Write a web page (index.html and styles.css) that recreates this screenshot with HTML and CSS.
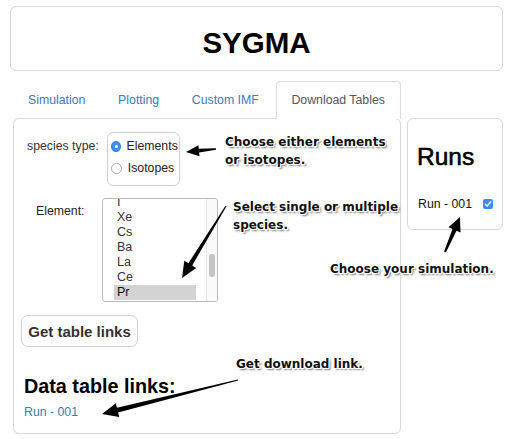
FILE: index.html
```html
<!DOCTYPE html>
<html lang="en">
<head>
<meta charset="utf-8">
<title>SYGMA</title>
<link rel="stylesheet" href="styles.css">
</head>
<body>
<header class="header"><h1 class="title">SYGMA</h1></header>

<nav class="tabs">
  <a class="tab">Simulation</a>
  <a class="tab">Plotting</a>
  <a class="tab">Custom IMF</a>
  <a class="tab active">Download Tables</a>
</nav>

<div class="main">
  <section class="panel">
    <div class="row species">
      <span class="label">species type:</span>
      <div class="radios">
        <div class="radio-line"><span class="radio on"></span><span>Elements</span></div>
        <div class="radio-line"><span class="radio"></span><span>Isotopes</span></div>
      </div>
    </div>
    <div class="row element">
      <span class="label elabel">Element:</span>
      <div class="listbox">
        <div class="options">
          <div class="opt">I</div>
          <div class="opt">Xe</div>
          <div class="opt">Cs</div>
          <div class="opt">Ba</div>
          <div class="opt">La</div>
          <div class="opt">Ce</div>
          <div class="opt sel">Pr</div>
        </div>
        <div class="scrollbar"><div class="thumb"></div></div>
      </div>
    </div>
    <div class="row btnrow"><button class="btn">Get table links</button></div>
    <h3 class="links-title">Data table links:</h3>
    <a class="link">Run - 001</a>
  </section>

  <aside class="runs">
    <h2 class="runs-title">Runs</h2>
    <div class="run-row"><span>Run - 001</span><span class="check"><svg width="10" height="10" viewBox="0 0 10 10"><path d="M2.3 5.2 L4.2 7 L7.8 2.8" fill="none" stroke="#fff" stroke-width="1.4" stroke-linecap="round" stroke-linejoin="round"/></svg></span></div>
  </aside>
</div>

<div class="note n1">Choose either elements<br>or isotopes.</div>
<div class="note n2">Select single or multiple<br>species.</div>
<div class="note n3">Choose your simulation.</div>
<div class="note n4">Get download link.</div>

<svg class="arrows" width="511" height="439" viewBox="0 0 511 439">
  <polygon points="215.9,148.2 198.8,148.8 198.4,145.2 186,152 199.5,156.2 199.1,152.6 216.1,149.8"/>
  <polygon points="225.5,205.7 188.4,263.2 184.3,260.7 182,278 196.3,268 192.2,265.5 226.5,206.3"/>
  <polygon points="445.9,252.4 456.5,230.8 460.5,232.5 460,217 448.5,227.3 452.5,229 444.1,251.6"/>
  <polygon points="237.85,379.4 116.9,407.7 115.8,403.3 102,414 119.2,416.9 118.1,412.5 238.15,380.6"/>
</svg>
</body>
</html>
```

FILE: styles.css
```css
html, body {
  margin: 0;
  padding: 0;
  background: #fff;
}
body {
  padding: 6px 8px 0 10px;
  font-family: "Liberation Sans", Arial, Helvetica, sans-serif;
  font-size: 12.3px;
  color: #333;
  position: relative;
  width: 493px;
}

.header {
  border: 1px solid #d6d6d6;
  border-radius: 6px;
  height: 63px;
  text-align: center;
}
.title {
  margin: 0;
  padding-top: 19px;
  font-size: 29.5px;
  line-height: 33px;
  font-weight: bold;
  color: #000;
}

.tabs {
  display: flex;
  margin: 10px 0 0 3px;
  position: relative;
  z-index: 2;
}
.tab {
  display: block;
  padding: 10px 14px;
  line-height: 16px;
  border: 1px solid transparent;
  border-bottom: none;
  margin-right: 2.7px;
  color: #3a7ab9;
  border-radius: 4px 4px 0 0;
}
.tab.active {
  color: #555;
  border-color: #ddd;
  background: #fff;
  margin-bottom: -1px;
  padding-bottom: 11px;
  padding-right: 15px;
}

.main {
  display: flex;
  align-items: flex-start;
  margin-left: 3px;
  gap: 6px;
}

.panel {
  width: 386px;
  height: 314px;
  border: 1px solid #d8d8d8;
  border-radius: 6px;
  position: relative;
}

.row {
  display: flex;
  align-items: flex-start;
}
.species {
  padding: 13px 0 0 13px;
}
.label {
  line-height: 22px;
  margin-top: 3px;
}
.radios {
  margin-left: 8px;
  border: 1px solid #cfcfcf;
  border-radius: 6px;
  padding: 2px 1px 6px 2px;
  width: 68px;
}
.radio-line {
  display: flex;
  align-items: center;
  height: 22px;
  color: #222;
}
.radio {
  width: 9px;
  height: 9px;
  border-radius: 50%;
  border: 1px solid #a8a8a8;
  background: #fff;
  margin-right: 6px;
  margin-left: 1px;
  box-sizing: content-box;
  position: relative;
}
.radio.on {
  background: #3d8ff3;
  border-color: #3584e8;
}
.radio.on::after {
  content: "";
  position: absolute;
  left: 3px;
  top: 3px;
  width: 3px;
  height: 3px;
  border-radius: 50%;
  background: #fff;
}

.element {
  padding: 12px 0 0 22px;
}
.elabel {
  margin-top: 5px;
  line-height: 16px;
  width: 48px;
  color: #222;
}
.listbox {
  margin-left: 18px;
  width: 114px;
  height: 102px;
  border: 1px solid #b9b9b9;
  border-radius: 3px;
  overflow: hidden;
  display: flex;
  position: relative;
}
.options {
  margin: -4px 0 0 11px;
  width: 82px;
}
.opt {
  height: 15px;
  line-height: 15px;
  padding-left: 3px;
  font-size: 12.5px;
  color: #333;
}
.opt.sel {
  background: #d3d3d3;
  color: #111;
}
.scrollbar {
  margin-left: auto;
  width: 10px;
  border-left: 1px solid #e6e6e6;
  background: #fafafa;
  position: relative;
}
.thumb {
  position: absolute;
  left: 2px;
  top: 55px;
  width: 6px;
  height: 23px;
  border-radius: 3px;
  background: #c3c3c3;
}

.btnrow {
  padding: 13px 0 0 7px;
}
.btn {
  font-family: "Liberation Sans", Arial, sans-serif;
  font-size: 15px;
  font-weight: bold;
  color: #333;
  background: #fff;
  border: 1px solid #d0d0d0;
  border-radius: 7px;
  width: 117px;
  height: 32px;
  padding: 0;
}

.links-title {
  margin: 28px 0 0 10px;
  font-size: 19.8px;
  line-height: 22px;
  font-weight: bold;
  color: #000;
}
.link {
  display: block;
  margin: 7px 0 0 10px;
  line-height: 17px;
  color: #3a7ab9;
}

.runs {
  width: 94px;
  height: 110px;
  border: 1px solid #d8d8d8;
  border-radius: 6px;
}
.runs-title {
  margin: 24px 0 0 9px;
  font-size: 24.5px;
  line-height: 28px;
  font-weight: normal;
  color: #000;
  -webkit-text-stroke: 0.6px #000;
}
.run-row {
  display: flex;
  align-items: center;
  margin: 25px 0 0 10px;
  line-height: 16px;
  color: #111;
}
.check {
  margin-left: 11px;
  width: 10px;
  height: 10px;
  border-radius: 2px;
  background: #3b8df2;
  display: block;
}
.check svg {
  display: block;
}

.note {
  position: absolute;
  font-family: "DejaVu Sans", sans-serif;
  font-weight: bold;
  font-size: 12px;
  line-height: 17.5px;
  color: #111;
  white-space: nowrap;
  text-shadow: 1px 1px 0 #fff, -1px -1px 0 #fff, 1px -1px 0 #fff, -1px 1px 0 #fff,
    0 1px 0 #fff, 1px 0 0 #fff, 0 -1px 0 #fff, -1px 0 0 #fff,
    2px 2px 2px rgba(0, 0, 0, 0.6);
  z-index: 3;
}
.n1 { left: 225px; top: 134px; }
.n2 { left: 233px; top: 199px; }
.n3 { left: 330px; top: 261px; }
.n4 { left: 236px; top: 356px; }

.arrows {
  position: absolute;
  left: 0;
  top: 0;
  pointer-events: none;
  z-index: 4;
}
.arrows polygon {
  fill: #000;
}
```
